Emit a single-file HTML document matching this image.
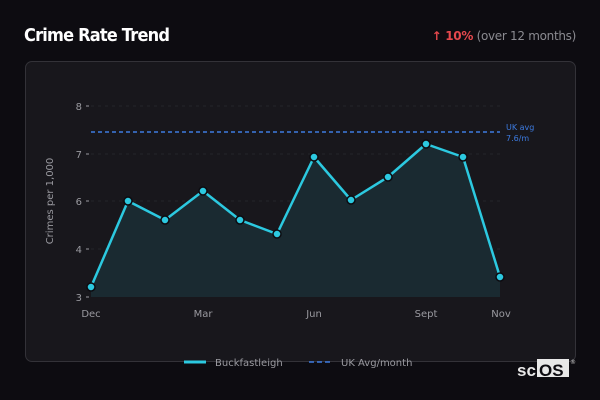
<!DOCTYPE html>
<html><head><style>
body{margin:0;width:600px;height:400px;background:#0d0c11;font-family:"Liberation Sans","DejaVu Sans",sans-serif;overflow:hidden;position:relative}
.t{position:absolute;left:24px;top:25px;color:#fff;font:bold 18px "DejaVu Sans",sans-serif;letter-spacing:-0.9px;transform:scaleX(0.9);transform-origin:left}
.r{position:absolute;right:24px;top:29px;color:#8a8a90;font:12px "DejaVu Sans",sans-serif;letter-spacing:-0.3px}
.r b{color:#e5484d}
.card{position:absolute;left:25px;top:61px;width:549px;height:299px;background:#18171c;border:1px solid #333238;border-radius:7px}
svg{position:absolute;left:0;top:0}
</style></head><body>
<div class="t">Crime Rate Trend</div>
<div class="r"><b>↑ 10%</b> (over 12 months)</div>
<div class="card"></div>
<svg width="600" height="400" font-family="DejaVu Sans,sans-serif">
<g stroke="#24242a" stroke-dasharray="3,4" stroke-width="1">
<line x1="91" y1="106" x2="500" y2="106"/><line x1="91" y1="154" x2="500" y2="154"/><line x1="91" y1="201" x2="500" y2="201"/><line x1="91" y1="249" x2="500" y2="249"/>
</g>
<g fill="#9a9aa0" font-size="10" text-anchor="end">
<text x="82" y="110">8</text><text x="82" y="158">7</text><text x="82" y="205">6</text><text x="82" y="253">4</text><text x="82" y="301">3</text>
</g>
<g stroke="#9a9aa0"><line x1="86" y1="106" x2="89" y2="106"/><line x1="86" y1="154" x2="89" y2="154"/><line x1="86" y1="201" x2="89" y2="201"/><line x1="86" y1="249" x2="89" y2="249"/><line x1="86" y1="297" x2="89" y2="297"/></g>
<text x="53" y="201" fill="#9a9aa0" font-size="10" text-anchor="middle" transform="rotate(-90 53 201)">Crimes per 1,000</text>
<g fill="#9a9aa0" font-size="10" text-anchor="middle">
<text x="91" y="317">Dec</text><text x="203" y="317">Mar</text><text x="314" y="317">Jun</text><text x="426" y="317">Sept</text><text x="501" y="317">Nov</text>
</g>
<path d="M91,287 L128,201 L165,220 L203,191 L240,220 L277,234 L314,157 L351,200 L388,177 L426,144 L463,157 L500,277 L500,297 L91,297Z" fill="#1a2a31"/>
<line x1="91" y1="132" x2="500" y2="132" stroke="#3d7be0" stroke-width="1.5" stroke-dasharray="4,3"/>
<text x="506" y="130" fill="#3d7be0" font-size="8">UK avg</text><text x="506" y="141" fill="#3d7be0" font-size="8">7.6/m</text>
<polyline points="91,287 128,201 165,220 203,191 240,220 277,234 314,157 351,200 388,177 426,144 463,157 500,277" fill="none" stroke="#2cc9e0" stroke-width="2.5" stroke-linejoin="round"/>
<g fill="#2cc9e0" stroke="#0d0c11" stroke-width="1.5">
<circle cx="91" cy="287" r="4"/><circle cx="128" cy="201" r="4"/><circle cx="165" cy="220" r="4"/><circle cx="203" cy="191" r="4"/><circle cx="240" cy="220" r="4"/><circle cx="277" cy="234" r="4"/><circle cx="314" cy="157" r="4"/><circle cx="351" cy="200" r="4"/><circle cx="388" cy="177" r="4"/><circle cx="426" cy="144" r="4"/><circle cx="463" cy="157" r="4"/><circle cx="500" cy="277" r="4"/>
</g>
<line x1="184" y1="362" x2="206" y2="362" stroke="#2cc9e0" stroke-width="3"/>
<text x="215" y="366" fill="#9a9aa0" font-size="10">Buckfastleigh</text>
<line x1="309" y1="362" x2="333" y2="362" stroke="#3d7be0" stroke-width="1.5" stroke-dasharray="5,3"/>
<text x="341" y="366" fill="#9a9aa0" font-size="10">UK Avg/month</text>
<rect x="537" y="359" width="32" height="18" fill="#e8e8e8"/>
<text x="517" y="376" fill="#e8e8e8" font-size="17" font-weight="bold" font-family="Liberation Sans,sans-serif">sc</text>
<text x="539" y="376" fill="#0d0c11" font-size="17" font-weight="bold" font-family="Liberation Sans,sans-serif">OS</text>
<text x="570" y="364" fill="#ccc" font-size="6">®</text>
</svg>
</body></html>
